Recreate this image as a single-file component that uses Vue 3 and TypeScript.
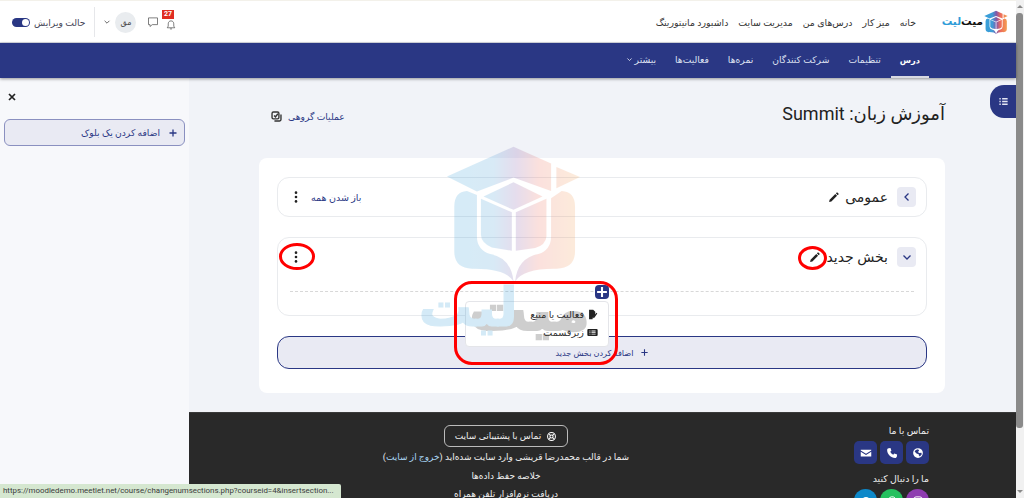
<script setup lang="ts">
const siteLinks = ['خانه', 'میز کار', 'درس‌های من', 'مدیریت سایت', 'داشبورد مانیتورینگ']
const tabs = ['درس', 'تنظیمات', 'شرکت کنندگان', 'نمره‌ها', 'فعالیت‌ها']
</script>

<template>
  <div class="screen">
    <div class="page" dir="rtl">
      <header class="topbar">
        <div class="brand">
          <svg class="brand__mark" viewBox="70 10 410 415" aria-hidden="true">
            <use href="#logo-mark" />
          </svg>
          <span class="brand__name"><b>میت</b><i>لیت</i></span>
        </div>
        <nav class="site-links">
          <a v-for="link in siteLinks" :key="link">{{ link }}</a>
        </nav>
        <div class="user-tools">
          <span class="bell">
            <svg viewBox="0 0 16 16" aria-hidden="true">
              <path d="M8 2.5c-2.4 0-3.7 1.8-3.7 4v3L3 11.7h10l-1.3-2.2v-3c0-2.2-1.3-4-3.7-4zM6.6 13.2h2.8" />
            </svg>
            <em class="bell__count">27</em>
          </span>
          <svg class="chat" viewBox="0 0 16 16" aria-hidden="true">
            <path d="M2 2.5h12v9H7l-3 2.5v-2.5H2z" />
          </svg>
          <span class="avatar">مق</span>
          <svg class="caret" viewBox="0 0 10 10" aria-hidden="true"><path d="M2 3.5 5 6.5 8 3.5" /></svg>
          <span class="divider"></span>
          <span class="edit-label">حالت ویرایش</span>
          <span class="switch"><span class="switch__knob"></span></span>
        </div>
      </header>

      <nav class="tabs">
        <a v-for="(tab, i) in tabs" :key="tab" class="tab" :class="{ 'tab--active': i === 0 }">{{ tab }}</a>
        <a class="tab">
          بیشتر
          <svg class="tab__caret" viewBox="0 0 10 10" aria-hidden="true"><path d="M2 3.5 5 6.5 8 3.5" /></svg>
        </a>
      </nav>

      <div class="body">
        <main class="main">
          <div class="content">
            <div class="course-head">
              <h1 class="course-title">آموزش زبان: Summit</h1>
              <a class="bulk">
                عملیات گروهی
                <svg viewBox="0 0 16 16" aria-hidden="true">
                  <rect x="1.5" y="1.5" width="10" height="10" rx="2" />
                  <path d="M4.5 6.5 6.5 8.5 10 4M14.5 5v7.5a2 2 0 0 1-2 2H5" />
                </svg>
              </a>
            </div>

            <section class="card">
              <div class="section section--closed">
                <div class="section__head">
                  <span class="toggle">
                    <svg viewBox="0 0 10 10" aria-hidden="true"><path d="M6.5 1.5 3 5l3.5 3.5" /></svg>
                  </span>
                  <span class="section__title">عمومی</span>
                  <svg class="pencil" viewBox="0 0 16 16" aria-hidden="true">
                    <path d="M12.1 1.500l2.400 2.400-1.600 1.600-2.400-2.400zM9.700 3.900l2.400 2.400-7.600 7.600-3 .6.6-3z" />
                  </svg>
                  <span class="section__spacer"></span>
                  <a class="expand-all">باز شدن همه</a>
                  <svg class="kebab" viewBox="0 0 6 16" aria-hidden="true">
                    <circle cx="3" cy="3" r="1.5" /><circle cx="3" cy="8" r="1.5" /><circle cx="3" cy="13" r="1.5" />
                  </svg>
                </div>
              </div>

              <div class="section section--open">
                <div class="section__head">
                  <span class="toggle">
                    <svg viewBox="0 0 10 10" aria-hidden="true"><path d="M1.5 3.5 5 7l3.5-3.5" /></svg>
                  </span>
                  <span class="section__title">بخش جدید</span>
                  <svg class="pencil" viewBox="0 0 16 16" aria-hidden="true">
                    <path d="M12.1 1.500l2.400 2.400-1.600 1.600-2.400-2.400zM9.700 3.900l2.400 2.400-7.600 7.600-3 .6.6-3z" />
                  </svg>
                  <span class="section__spacer"></span>
                  <svg class="kebab" viewBox="0 0 6 16" aria-hidden="true">
                    <circle cx="3" cy="3" r="1.5" /><circle cx="3" cy="8" r="1.5" /><circle cx="3" cy="13" r="1.5" />
                  </svg>
                </div>
                <div class="section__dash"></div>
                <span class="add-activity">
                  <svg viewBox="0 0 10 10" aria-hidden="true"><path d="M5 1.5v7M1.5 5h7" /></svg>
                </span>
                <div class="add-menu">
                  <div class="add-menu__item">
                    <svg viewBox="0 0 16 16" aria-hidden="true">
                      <path d="M3 1h6l3 3v4l-3.500 4.500L8 15H3zM15 6.500l-1.200-1-4.600 6-.5 2 2-.8z" />
                    </svg>
                    فعالیت یا منبع
                  </div>
                  <div class="add-menu__item">
                    <svg viewBox="0 0 16 16" aria-hidden="true">
                      <path fill-rule="evenodd" d="M2 3h12a1.500 1.500 0 0 1 1.500 1.500v7A1.500 1.500 0 0 1 14 13H2a1.500 1.500 0 0 1-1.500-1.500v-7A1.500 1.500 0 0 1 2 3zm1.500 2v1.500H5V5zm3 0v1.500h6V5zm-3 2.500V9H5V7.500zm3 0V9h6V7.500zM3.500 10v1H5v-1zm3 0v1h6v-1z" />
                    </svg>
                    زیرقسمت
                  </div>
                </div>
              </div>

              <button class="add-section">
                <svg viewBox="0 0 10 10" aria-hidden="true"><path d="M5 1.500v7M1.500 5h7" /></svg>
                اضافه کردن بخش جدید
              </button>
            </section>
          </div>

          <footer class="footer">
            <div class="contact">
              <h4>تماس با ما</h4>
              <div class="contact__row">
                <span class="square">
                  <svg viewBox="0 0 16 16" aria-hidden="true">
                    <path d="M8 1.500a6.500 6.500 0 1 0 0 13 6.500 6.500 0 0 0 0-13zM5 4l3-1 1.500 1.500L8 6.500 9.500 8l3-.5.5 2-2.500 3-1.500-1.500V9.500L6 8.500 3.500 6z" fill-rule="evenodd" />
                  </svg>
                </span>
                <span class="square">
                  <svg viewBox="0 0 16 16" aria-hidden="true">
                    <path d="M3.500 1.500 6 1.200 7.200 5 5.600 6.400a8 8 0 0 0 4 4L11 8.800l3.800 1.200-.3 2.500c-.2 1.200-1.200 2-2.400 2C6.500 14.500 1.500 9.500 1.500 3.900c0-1.200.8-2.200 2-2.400z" />
                  </svg>
                </span>
                <span class="square">
                  <svg viewBox="0 0 16 16" aria-hidden="true">
                    <path d="M1 3.500h14v1.200L8 9 1 4.700zM1 6.200 8 10.500l7-4.300v6.300H1z" />
                  </svg>
                </span>
              </div>
              <h4>ما را دنبال کنید</h4>
              <div class="contact__row">
                <span class="round round--instagram">
                  <svg viewBox="0 0 16 16" aria-hidden="true" class="line">
                    <rect x="2.500" y="2.500" width="11" height="11" rx="3" /><circle cx="8" cy="8" r="2.500" />
                  </svg>
                </span>
                <span class="round round--whatsapp">
                  <svg viewBox="0 0 16 16" aria-hidden="true" class="line">
                    <path d="M2.500 13.500 3.300 10.500a5.500 5.500 0 1 1 2.200 2.200z" />
                  </svg>
                </span>
                <span class="round round--telegram">
                  <svg viewBox="0 0 16 16" aria-hidden="true">
                    <circle cx="8" cy="8" r="5.500" />
                  </svg>
                </span>
              </div>
            </div>
            <div class="footer__info">
              <a class="support">
                <svg viewBox="0 0 16 16" aria-hidden="true">
                  <circle cx="8" cy="8" r="5.700" /><circle cx="8" cy="8" r="2.300" />
                  <path d="M4 4l2.400 2.400M12 4 9.600 6.400M4 12l2.400-2.400M12 12 9.600 9.600" />
                </svg>
                تماس با پشتیبانی سایت
              </a>
              <p>شما در قالب محمدرضا قریشی وارد سایت شده‌اید (<u>خروج از سایت</u>)</p>
              <p>خلاصه حفظ داده‌ها</p>
              <p>دریافت نرم‌افزار تلفن همراه</p>
            </div>
          </footer>
        </main>

        <aside class="blocks">
          <svg class="blocks__close" viewBox="0 0 10 10" aria-hidden="true"><path d="M2 2l6 6M8 2 2 8" /></svg>
          <button class="add-block">
            <svg viewBox="0 0 10 10" aria-hidden="true"><path d="M5 1.500v7M1.500 5h7" /></svg>
            اضافه کردن یک بلوک
          </button>
        </aside>
      </div>

      <!-- واترمارک روی همه چیز -->
      <div class="watermark" aria-hidden="true">
        <svg class="watermark__mark" viewBox="70 10 410 415">
          <defs>
            <linearGradient id="logo-grad" gradientUnits="userSpaceOnUse" x1="70" y1="0" x2="480" y2="0">
              <stop offset="0" stop-color="#35a0da" />
              <stop offset="0.35" stop-color="#3f9bd6" />
              <stop offset="0.52" stop-color="#8358a8" />
              <stop offset="0.68" stop-color="#ec6a5c" />
              <stop offset="1" stop-color="#f5a64e" />
            </linearGradient>
            <g id="logo-mark" fill="url(#logo-grad)">
              <path d="M75 105 275 15 388 66V148L275 108 165 150z" />
              <path d="M404 76 475 106 404 140z" />
              <path d="M400 165h16l4 33-20 2z" />
              <path d="M185 165 275 122 362 165 275 205z" />
              <path d="M177 172 270 212V328L210 318Q178 305 177 280z" />
              <path d="M282 212 374 172V285Q372 310 340 320L282 328z" />
              <path d="M135 148 Q97 150 97 195V330Q97 380 150 382 250 380 275 420 268 350 205 338 165 325 165 285V160z" />
              <path d="M420 148Q460 150 460 195V330Q460 380 405 382 305 380 280 420 287 350 350 338 388 325 388 285V170z" />
            </g>
          </defs>
          <use href="#logo-mark" />
        </svg>
        <b class="watermark__grey">میت</b>
        <i class="watermark__blue">لیت</i>
      </div>

      <!-- علامت‌های قرمز آموزش -->
      <span class="mark mark--kebab"></span>
      <span class="mark mark--pencil"></span>
      <span class="mark mark--menu"></span>

      <button class="drawer-toggle">
        <svg viewBox="0 0 16 16" aria-hidden="true">
          <path d="M2 3h2v2H2zM6 3h8v2H6zM2 7h2v2H2zM6 7h8v2H6zM2 11h2v2H2zM6 11h8v2H6z" />
        </svg>
      </button>

      <div class="status-link" dir="ltr">https://moodledemo.meetlet.net/course/changenumsections.php?courseid=4&amp;insertsection...</div>
    </div>

    <div class="scrollbar" aria-hidden="true">
      <svg viewBox="0 0 8 8" class="scrollbar__arrow"><path d="M1 5.500 4 2.500 7 5.500z" /></svg>
      <div class="scrollbar__track"><div class="scrollbar__thumb"></div></div>
      <svg viewBox="0 0 8 8" class="scrollbar__arrow"><path d="M1 2.500 4 5.500 7 2.500z" /></svg>
    </div>
  </div>
</template>

<style>
html,
body {
  margin: 0;
  overflow: hidden;
}
</style>

<style scoped>
.screen {
  display: flex;
  width: 1024px;
  height: 498px;
  overflow: hidden;
  background: #f1f3f8;
  font-family: Roboto, "DejaVu Sans", sans-serif;
  color: #222;
}

.page {
  position: relative;
  flex: 1;
  min-width: 0;
  display: flex;
  flex-direction: column;
}

.topbar {
  display: flex;
  align-items: center;
  box-sizing: border-box;
  height: 43px;
  padding: 2px 8px 0 12px;
  background: #fff;
  border-bottom: 1px solid #d9dbe3;
  box-shadow: inset 0 1px 0 #f3f1ea;
}

.brand {
  display: flex;
  align-items: center;
  gap: 1px;
  width: 68px;
}

.brand__mark {
  width: 24px;
  height: 25px;
  flex: none;
}

.brand__name {
  display: flex;
  font-size: 10.500px;
  font-weight: 700;
  line-height: 1;
  white-space: nowrap;
}

.brand__name b {
  color: #111;
}

.brand__name i {
  font-style: normal;
  color: #2e9cd8;
}

.site-links {
  display: flex;
  gap: 10px;
  margin-inline-start: 24px;
  font-size: 9.400px;
  color: #333;
}

.user-tools {
  display: flex;
  align-items: center;
  margin-inline-start: auto;
  height: 36px;
}

.bell {
  position: relative;
  width: 12px;
  height: 12px;
}

.bell svg,
.chat {
  width: 12px;
  height: 12px;
  fill: none;
  stroke: #555;
  stroke-width: 1;
}

.bell__count {
  position: absolute;
  top: -6px;
  left: -3px;
  padding: 0 1.500px;
  background: #e02d22;
  color: #fff;
  font: 700 7px/9px Roboto, sans-serif;
}

.chat {
  margin-inline-start: 6px;
}

.avatar {
  display: flex;
  align-items: center;
  justify-content: center;
  width: 21px;
  height: 21px;
  margin-inline-start: 11px;
  border-radius: 50%;
  background: #e9ecef;
  font-size: 8px;
  color: #444;
}

.caret {
  width: 8px;
  height: 8px;
  margin-inline-start: 4px;
  fill: none;
  stroke: #555;
  stroke-width: 1.100;
}

.divider {
  width: 1px;
  height: 30px;
  margin-inline-start: 8px;
  background: #e6e7ea;
}

.edit-label {
  margin-inline-start: 9px;
  font-size: 9.200px;
  color: #445;
}

.switch {
  display: flex;
  align-items: center;
  justify-content: flex-start;
  box-sizing: border-box;
  width: 18px;
  height: 9px;
  margin-inline-start: 4px;
  padding: 0 1px;
  background: #2a3784;
  border-radius: 5px;
}

.switch__knob {
  width: 7px;
  height: 7px;
  border-radius: 50%;
  background: #fff;
}

.tabs {
  position: relative;
  z-index: 1;
  display: flex;
  height: 35px;
  padding-inline-start: 87px;
  background: #2a3784;
  box-shadow: 0 1px 3px rgba(0, 0, 0, .4);
}

.tab {
  display: flex;
  align-items: center;
  gap: 2px;
  box-sizing: border-box;
  padding: 0 9px;
  margin-inline-end: 1px;
  font-size: 9.200px;
  color: #dfe2f2;
  border-bottom: 2px solid transparent;
}

.tab--active {
  color: #fff;
  font-size: 8.200px;
  font-weight: 700;
  border-bottom-color: #d8d9e2;
}

.tab__caret {
  width: 7px;
  height: 7px;
  fill: none;
  stroke: #dfe2f2;
  stroke-width: 1.200;
}

.body {
  flex: 1;
  min-height: 0;
  display: flex;
}

.main {
  flex: 1;
  min-width: 0;
  display: flex;
  flex-direction: column;
}

.content {
  padding: 0 71px 19px 70px;
}

.course-head {
  display: flex;
  align-items: center;
  justify-content: space-between;
  height: 72px;
  margin-bottom: 8px;
}

.course-title {
  margin: 0 0 2px;
  font-size: 18px;
  font-weight: 400;
  color: #222;
}

.bulk {
  display: flex;
  align-items: center;
  gap: 6px;
  margin-inline-end: 12px;
  padding-top: 5px;
  font-size: 9.200px;
  color: #2a3784;
}

.bulk svg {
  width: 11px;
  height: 11px;
  fill: none;
  stroke: #333;
  stroke-width: 2;
}

.card {
  box-sizing: border-box;
  display: flex;
  flex-direction: column;
  gap: 20px;
  height: 235px;
  padding: 19px 18px;
  background: #fff;
  border-radius: 8px;
}

.section {
  position: relative;
  box-sizing: border-box;
  border: 1px solid #e9ebee;
  border-radius: 12px;
  padding: 9px 10px 0;
}

.section--closed {
  height: 40px;
}

.section--open {
  height: 79px;
}

.section__head {
  display: flex;
  align-items: center;
  gap: 9px;
  height: 20px;
}

.toggle {
  display: flex;
  align-items: center;
  justify-content: center;
  flex: none;
  width: 19px;
  height: 20px;
  border-radius: 4px;
  background: #e9eaf3;
}

.toggle svg {
  width: 10px;
  height: 10px;
  fill: none;
  stroke: #2a3784;
  stroke-width: 1.300;
}

.section__title {
  font-size: 14px;
  color: #222;
}

.pencil {
  width: 12px;
  height: 12px;
  fill: #222;
  margin-inline-start: -4px;
}

.section__spacer {
  flex: 1;
}

.expand-all {
  font-size: 9.500px;
  color: #2a3784;
}

.kebab {
  width: 6px;
  height: 14px;
  flex: none;
  fill: #222;
  margin-inline-start: 3px;
  margin-inline-end: 5px;
}

.section__dash {
  margin: 24px 2px 0 2px;
  border-top: 1px dashed #d8d8d8;
}

.add-activity {
  position: absolute;
  top: 47px;
  left: 317px;
  display: flex;
  width: 14px;
  height: 14px;
  border-radius: 4px;
  background: #2a3784;
}

.add-activity svg {
  width: 14px;
  height: 14px;
  fill: none;
  stroke: #fff;
  stroke-width: 1.500;
}

.add-menu {
  position: absolute;
  z-index: 2;
  top: 63px;
  left: 187px;
  box-sizing: border-box;
  width: 144px;
  height: 46px;
  padding: 3px 10px;
  background: #fff;
  border: 1px solid #e4e5e9;
  border-radius: 4px;
}

.add-menu__item {
  display: flex;
  align-items: center;
  gap: 3px;
  height: 18px;
  font-size: 9.600px;
  color: #333;
}

.add-menu__item svg {
  width: 11px;
  height: 11px;
  fill: #222;
}

.add-section {
  display: flex;
  align-items: center;
  justify-content: center;
  gap: 6px;
  height: 33px;
  margin: 0;
  padding: 0;
  background: #e9eaf3;
  border: 1px solid #2a3784;
  border-radius: 12px;
  font: inherit;
  font-size: 8.200px;
  color: #2a3784;
}

.add-section svg {
  width: 9px;
  height: 9px;
  fill: none;
  stroke: #2a3784;
  stroke-width: 1.200;
}

.footer {
  flex: 1;
  display: flex;
  gap: 223px;
  padding: 12px 87px 0 0;
  background: #292929;
  border-top: 1px solid #3a3a3a;
  color: #eee;
}

.contact h4 {
  margin: 0 0 4px;
  font-size: 9.400px;
  font-weight: 500;
  line-height: 12px;
}

.contact__row {
  display: flex;
  gap: 3px;
  margin-bottom: 9px;
}

.square,
.round {
  display: flex;
  align-items: center;
  justify-content: center;
  width: 23px;
  height: 23px;
  background: #2a3784;
  border-radius: 5px;
}

.round {
  border-radius: 50%;
}

.round--instagram {
  background: #8e3cb0;
}

.round--whatsapp {
  background: #25c05e;
}

.round--telegram {
  background: #0d88c9;
}

.square svg,
.round svg {
  width: 12px;
  height: 12px;
  fill: #fff;
}

.round svg.line {
  fill: none;
  stroke: #fff;
  stroke-width: 1.300;
}

.footer__info {
  display: flex;
  flex-direction: column;
  align-items: center;
  width: 250px;
}

.support {
  display: flex;
  align-items: center;
  gap: 5px;
  box-sizing: border-box;
  height: 22px;
  margin-bottom: 1px;
  padding: 0 10px;
  border: 1px solid #bbb;
  border-radius: 6px;
  font-size: 9px;
  font-weight: 500;
}

.support svg {
  width: 11px;
  height: 11px;
  fill: none;
  stroke: #fff;
  stroke-width: 1.500;
}

.footer__info p {
  margin: 0;
  height: 18.500px;
  line-height: 18.500px;
  font-size: 9px;
  white-space: nowrap;
}

.footer__info u {
  text-decoration: none;
  color: #a9d6f5;
}

.blocks {
  box-sizing: border-box;
  flex: none;
  width: 189px;
  padding: 14px 4px 0;
  background: #f7f8fb;
}

.blocks__close {
  display: block;
  width: 10px;
  height: 10px;
  margin-inline-start: auto;
  margin-inline-end: 3px;
  fill: none;
  stroke: #222;
  stroke-width: 1.700;
}

.add-block {
  display: flex;
  align-items: center;
  gap: 8px;
  box-sizing: border-box;
  width: 181px;
  height: 27px;
  margin-top: 17px;
  padding: 0 6px;
  background: #e9eaf3;
  border: 1px solid #8a90c0;
  border-radius: 6px;
  font: inherit;
  font-size: 9.200px;
  color: #2a3784;
}

.add-block svg {
  width: 10px;
  height: 10px;
  fill: none;
  stroke: #2a3784;
  stroke-width: 1.300;
}

.watermark {
  position: absolute;
  z-index: 3;
  top: 145px;
  left: 430px;
  width: 160px;
  height: 205px;
  opacity: .2;
  pointer-events: none;
}

.watermark__mark {
  position: absolute;
  top: 0;
  left: 15px;
  width: 137px;
  height: 138px;
}

.watermark__grey,
.watermark__blue {
  position: absolute;
  font-style: normal;
  font-weight: 700;
  line-height: 1;
  white-space: nowrap;
  text-align: center;
}

.watermark__grey {
  top: 136px;
  left: 50px;
  width: 110px;
  font-size: 58px;
  color: #111;
  -webkit-text-stroke: 2px #111;
}

.watermark__blue {
  top: 136px;
  left: 8px;
  width: 80px;
  font-size: 54px;
  color: #2e9cd8;
  -webkit-text-stroke: 1px #2e9cd8;
}

.mark {
  position: absolute;
  z-index: 4;
  box-sizing: border-box;
  border: 3px solid #f00;
  pointer-events: none;
}

.mark--kebab {
  top: 243px;
  left: 279px;
  width: 36px;
  height: 27px;
  border-radius: 50%;
}

.mark--pencil {
  top: 246px;
  left: 798px;
  width: 29px;
  height: 24px;
  border-radius: 50%;
}

.mark--menu {
  top: 281px;
  left: 454px;
  width: 164px;
  height: 84px;
  border-radius: 18px;
}

.drawer-toggle {
  position: absolute;
  z-index: 2;
  top: 85px;
  right: 0;
  display: flex;
  align-items: center;
  justify-content: center;
  width: 26px;
  height: 33px;
  padding: 0;
  border: 0;
  border-radius: 14px 0 0 14px;
  background: #2a3784;
}

.drawer-toggle svg {
  width: 11px;
  height: 11px;
  fill: #e4e6f3;
}

.status-link {
  position: absolute;
  z-index: 5;
  left: 0;
  bottom: 0;
  box-sizing: border-box;
  width: 341px;
  height: 14px;
  padding: 0 3px;
  background: #d5e7d0;
  border-radius: 0 2px 0 0;
  font: 7.900px/14px Roboto, sans-serif;
  color: #3b3b3b;
  white-space: nowrap;
  overflow: hidden;
}

.scrollbar {
  display: flex;
  flex-direction: column;
  flex: none;
  width: 8px;
  background: #f1f1f1;
}

.scrollbar__arrow {
  width: 8px;
  height: 13px;
  fill: #8a8a8a;
}

.scrollbar__track {
  flex: 1;
}

.scrollbar__thumb {
  width: 7px;
  height: 415px;
  border-radius: 3px;
  background: #8a8a8a;
}
</style>
